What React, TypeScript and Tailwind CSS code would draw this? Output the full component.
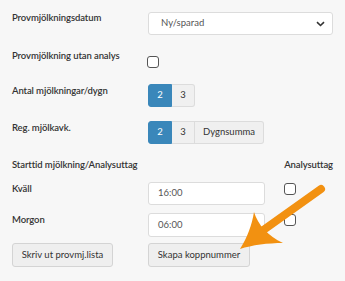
import React from "react";

const font = { fontFamily: "Lato, 'Noto Sans', sans-serif" };

function Checkbox() {
  return <div className="w-[12px] h-[12px] rounded-[3px] border-[1.5px] border-[#555] bg-white" />;
}

function Seg({ items, active }: { items: { label: string; w: string }[]; active: number }) {
  return (
    <div className="flex h-[23px]">
      {items.map((it, i) => (
        <div
          key={i}
          className={
            (i === active
              ? "bg-[#3a87ba] text-white border-[#3a87ba] "
              : "bg-[#f0f0f0] text-[#333] border-[#dcdcdc] ") +
            (i === 0 ? "rounded-l-[3px] " : "") +
            (i === items.length - 1 ? "rounded-r-[3px] " : "") +
            "border flex items-center justify-center text-[9.5px] " +
            it.w
          }
        >
          {it.label}
        </div>
      ))}
    </div>
  );
}

const label = "w-[136px] text-[9.5px] leading-[14px] font-semibold tracking-[-0.1px]";

export default function App() {
  return (
    <div className="relative w-[345px] h-[281px] bg-[#f7f7f7] text-[#333] overflow-hidden" style={font}>
      <div className="px-3 pt-3 flex flex-col">
        <div className="flex items-start h-[23px]">
          <div className={label + " -mt-px"}>Provmjölkningsdatum</div>
          <div className="w-[185px] h-[23px] bg-white border border-[#dcdcdc] rounded-[3px] flex items-center pl-3 pr-[7px] text-[9.5px] text-[#555]">
            <span className="flex-1">Ny/sparad</span>
            <svg width="9" height="6" viewBox="0 0 9 6">
              <path d="M1 1.2 L4.5 4.5 L8 1.2" stroke="#333" strokeWidth="1.6" fill="none" />
            </svg>
          </div>
        </div>
        <div className="flex items-start mt-[14px]">
          <div className={label}>Provmjölkning utan analys</div>
          <div className="mt-[7px] -ml-px">
            <Checkbox />
          </div>
        </div>
        <div className="flex items-start mt-[16px]">
          <div className={label}>Antal mjölkningar/dygn</div>
          <Seg items={[{ label: "2", w: "w-[24px]" }, { label: "3", w: "w-[23px] border-l-0" }]} active={0} />
        </div>
        <div className="flex items-start mt-[14px]">
          <div className={label}>Reg. mjölkavk.</div>
          <Seg
            items={[
              { label: "2", w: "w-[24px]" },
              { label: "3", w: "w-[23px] border-l-0" },
              { label: "Dygnsumma", w: "w-[69px] border-l-0" },
            ]}
            active={0}
          />
        </div>
        <div className="flex items-start mt-[14px] text-[9.5px] leading-[14px] font-semibold tracking-[-0.1px]">
          <div className="w-[273px]">Starttid mjölkning/Analysuttag</div>
          <div>Analysuttag</div>
        </div>
        <div className="flex items-start mt-[10px]">
          <div className={label}>Kväll</div>
          <div className="w-[117px] h-[23px] bg-white border border-[#dcdcdc] rounded-[3px] flex items-center pl-[9px] text-[9.5px] text-[#555]">
            16:00
          </div>
          <div className="ml-[19px] mt-px">
            <Checkbox />
          </div>
        </div>
        <div className="flex items-start mt-[8px]">
          <div className={label}>Morgon</div>
          <div className="w-[117px] h-[24px] bg-white border border-[#dcdcdc] rounded-[3px] flex items-center pl-[9px] text-[9.5px] text-[#555]">
            06:00
          </div>
          <div className="ml-[19px] mt-px">
            <Checkbox />
          </div>
        </div>
        <div className="flex items-start mt-[6px]">
          <div className="w-[136px]">
            <div className="w-[101px] h-[24px] bg-[#efefef] border border-[#d4d4d4] rounded-[3px] flex items-center justify-center text-[9.5px]">
              Skriv ut provmj.lista
            </div>
          </div>
          <div className="w-[102px] h-[24px] bg-[#efefef] border border-[#d4d4d4] rounded-[3px] flex items-center justify-center text-[9.5px]">
            Skapa koppnummer
          </div>
        </div>
      </div>
      <svg className="absolute left-0 top-0" width="345" height="281" viewBox="0 0 345 281">
        <line x1="262" y1="231" x2="321" y2="189" stroke="#f29111" strokeWidth="8" strokeLinecap="round" />
        <path
          d="M240 249 C247 238 252 225 254 212 C258 225 268 236 283 243 C268 243 252 245 240 249 Z"
          fill="#f29111"
        />
      </svg>
    </div>
  );
}
